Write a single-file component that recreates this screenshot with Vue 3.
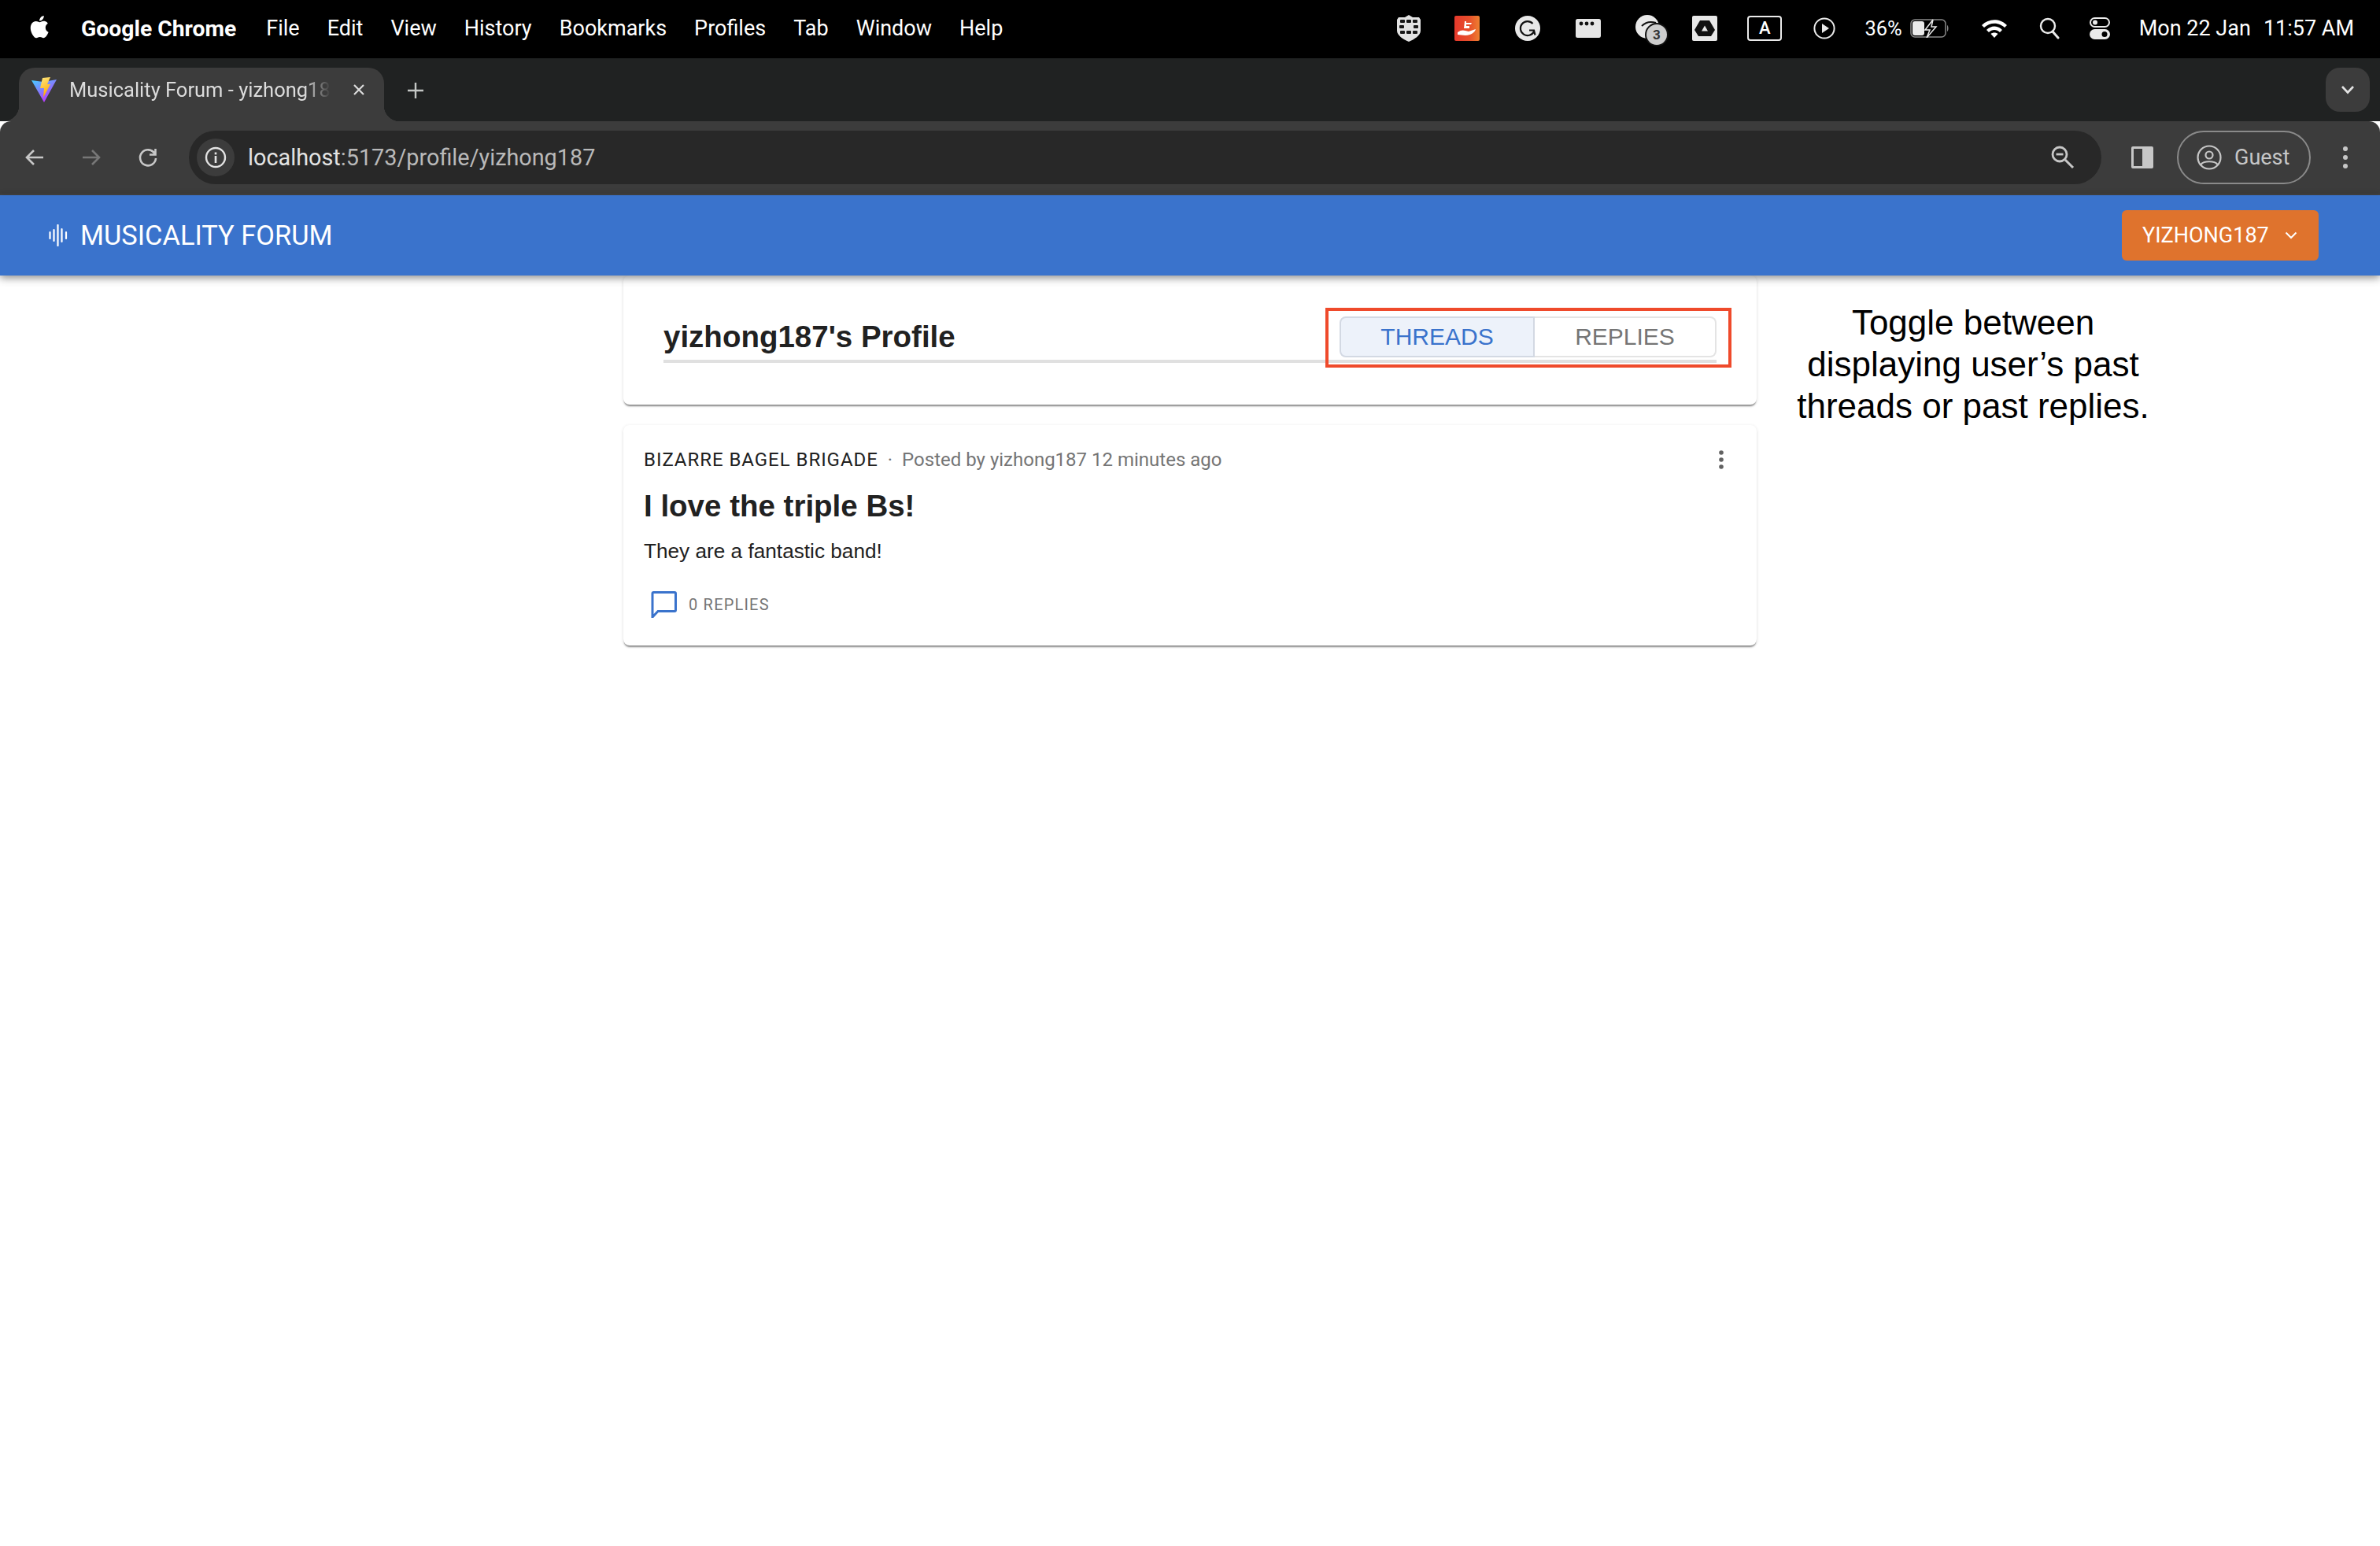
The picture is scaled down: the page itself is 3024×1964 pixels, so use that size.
<script setup>
const menus = ['File', 'Edit', 'View', 'History', 'Bookmarks', 'Profiles', 'Tab', 'Window', 'Help']
</script>

<template>
  <div class="screen">
    <!-- mac menu bar -->
    <div class="menubar">
      <svg class="apple" viewBox="0 0 24 28"><path d="M17.6 14.9c0-3 2.4-4.400 2.500-4.500-1.400-2-3.500-2.300-4.200-2.300-1.800-.2-3.500 1.100-4.400 1.100-.9 0-2.300-1-3.800-1-2 0-3.800 1.100-4.800 2.900-2 3.600-.5 8.800 1.500 11.700 1 1.400 2.100 3 3.600 3 1.500-.1 2-1 3.800-1s2.300 1 3.800.9c1.600 0 2.600-1.400 3.500-2.800 1.100-1.600 1.600-3.200 1.600-3.300-.1 0-3.100-1.200-3.100-4.700zM14.700 6.200c.8-1 1.300-2.300 1.200-3.700-1.100 0-2.600.8-3.400 1.800-.7.900-1.400 2.200-1.200 3.500 1.300.1 2.600-.6 3.400-1.600z" fill="#fff"/></svg>
      <span class="app-name">Google Chrome</span>
      <span v-for="m in menus" :key="m" class="menu-item">{{ m }}</span>

      <div class="status">
        <svg class="st st-shield" viewBox="0 0 30 34"><path d="M15 0 L20 3 H28 L30 6 V20 C30 26 22 31 15 34 C8 31 0 26 0 20 V6 L2 3 H10 Z" fill="#e2e2e2"/><g fill="#161616"><rect x="4" y="6" width="6" height="4" rx="1"/><rect x="12" y="6" width="6" height="4" rx="1"/><rect x="20" y="6" width="6" height="4" rx="1"/><rect x="3" y="13" width="6" height="4" rx="1"/><rect x="21" y="13" width="6" height="4" rx="1"/><rect x="4" y="20" width="6" height="4" rx="1"/><rect x="12" y="20" width="6" height="4" rx="1"/><rect x="20" y="20" width="6" height="4" rx="1"/></g></svg>
        <svg class="st st-red" viewBox="0 0 32 32"><defs><linearGradient id="redg" x1="0" x2="1"><stop offset="0" stop-color="#e5392c"/><stop offset="0.6" stop-color="#e8502c"/><stop offset="1" stop-color="#ee8030"/></linearGradient></defs><rect width="32" height="32" rx="2" fill="url(#redg)"/><path d="M4 21 C8 18 11 18 14 19 L18 20 L27 17 C26 21 21 25 14 25 C10 25 7 24 4 24 Z" fill="#fff"/><path d="M13 7 L15 7 V9 H22 L21 11 H15 V13 H19 V16 H12 Z" fill="#fff"/></svg>
        <svg class="st st-g" viewBox="0 0 32 32"><circle cx="16" cy="16" r="16" fill="#e8e8e8"/><path d="M22.500 10 A9 9 0 1 0 24 20 M25.500 24.500 L24 18.500 H18" fill="none" stroke="#111" stroke-width="2.200"/></svg>
        <svg class="st st-win" viewBox="0 0 32 24"><rect width="32" height="24" rx="2.500" fill="#e6e6e6"/><circle cx="7" cy="6" r="2.400" fill="#111"/><circle cx="14" cy="6" r="2.400" fill="#111"/><circle cx="21" cy="6" r="2.400" fill="#111"/></svg>
        <svg class="st st-cloud" viewBox="0 0 42 40"><circle cx="15" cy="15" r="15" fill="#e8e8e8"/><path d="M8 14 C14 8 20 8 26 10" fill="none" stroke="#111" stroke-width="2"/><circle cx="27" cy="25" r="15" fill="#111"/><circle cx="27" cy="25" r="13" fill="#cdcdcd"/><text x="27" y="31" text-anchor="middle" class="cloud-num">3</text></svg>
        <svg class="st st-drive" viewBox="0 0 32 32"><rect width="32" height="32" rx="2" fill="#e8e8e8"/><path d="M10 6 H22 L29 18 L24 26 H8 L3 18 Z" fill="#111"/><path d="M16 12.500 L20 19.500 H12 Z" fill="#e8e8e8"/></svg>
        <div class="st st-a">A</div>
        <svg class="st st-play" viewBox="0 0 28 28"><circle cx="14" cy="14" r="12.600" fill="none" stroke="#eaeaea" stroke-width="2"/><path d="M11 8 L20 14 L11 20 Z" fill="#eaeaea"/></svg>
        <span class="st-pct">36%</span>
        <svg class="st st-batt" viewBox="0 0 50 24"><rect x="1" y="1" width="44" height="22" rx="5" fill="none" stroke="#8a8a8a" stroke-width="1.500"/><rect x="3" y="3" width="15" height="18" rx="3" fill="#eaeaea"/><path d="M47 8 C49 9 49 15 47 16 Z" fill="#8a8a8a"/><path d="M29 1 L19 14 H25 L21 24 L33 10 H27 Z" fill="#000" stroke="#eaeaea" stroke-width="1.500"/></svg>
        <svg class="st st-wifi" viewBox="0 0 34 26"><path d="M1 9 C10 0 24 0 33 9 L30 12 C22 5 12 5 4 12 Z M7 15 C13 9 21 9 27 15 L24 18 C20 14 14 14 10 18 Z M12.500 20 C15 18 19 18 21.500 20 L17 25 Z" fill="#fff"/></svg>
        <svg class="st st-search" viewBox="0 0 26 28"><circle cx="11" cy="11" r="9" fill="none" stroke="#eaeaea" stroke-width="2.400"/><path d="M17 18 L24 26" stroke="#eaeaea" stroke-width="3" stroke-linecap="round"/></svg>
        <svg class="st st-ctrl" viewBox="0 0 26 28"><rect x="1" y="1" width="24" height="11" rx="5.500" fill="none" stroke="#eaeaea" stroke-width="2"/><circle cx="7" cy="6.500" r="3" fill="#eaeaea"/><rect y="15" width="26" height="13" rx="6.500" fill="#eaeaea"/><circle cx="19" cy="21.500" r="3.500" fill="#000"/></svg>
        <span class="clock"><span>Mon 22 Jan</span><span>11:57 AM</span></span>
      </div>
    </div>

    <!-- browser tabs -->
    <div class="tabstrip">
      <div class="tab">
        <svg class="vite" viewBox="0 0 32 32">
          <defs>
            <linearGradient id="vg1" x1="0" y1="0" x2="0.6" y2="1"><stop offset="0" stop-color="#41d1ff"/><stop offset="1" stop-color="#bd34fe"/></linearGradient>
            <linearGradient id="vg2" x1="0" y1="0" x2="0.3" y2="1"><stop offset="0" stop-color="#ffea83"/><stop offset="1" stop-color="#ffa800"/></linearGradient>
          </defs>
          <path d="M0 4 L15 6 L32 3 L16 32 Z" fill="url(#vg1)"/>
          <path d="M14 1 L24 0 L20 9 L24 9 L15 26 L16 14 L11 14 Z" fill="url(#vg2)"/>
        </svg>
        <span class="tab-title">Musicality Forum - yizhong187</span>
        <svg class="tab-close" viewBox="0 0 16 16"><path d="M2 2 L14 14 M14 2 L2 14" stroke="#dcdcdc" stroke-width="2.200"/></svg>
      </div>
      <svg class="tab-plus" viewBox="0 0 20 20"><path d="M10 0 V20 M0 10 H20" stroke="#c4c7c5" stroke-width="2.400"/></svg>
      <div class="tab-search">
        <svg viewBox="0 0 18 12" class="chev"><path d="M2 2 L9 9.500 L16 2" fill="none" stroke="#e3e3e3" stroke-width="2.600"/></svg>
      </div>
    </div>

    <!-- browser toolbar -->
    <div class="toolbar">
      <svg class="nav" viewBox="0 0 26 26"><path d="M24 13 H4 M12 4 L3 13 L12 22" fill="none" stroke="#c7c7c7" stroke-width="2.600"/></svg>
      <svg class="nav" viewBox="0 0 26 26"><path d="M2 13 H22 M14 4 L23 13 L14 22" fill="none" stroke="#777" stroke-width="2.600"/></svg>
      <svg class="nav" viewBox="0 0 26 26"><path d="M21.500 8 A10 10 0 1 0 23 14 M22.500 2 V9.500 H15" fill="none" stroke="#c7c7c7" stroke-width="2.600"/></svg>
      <div class="omnibox">
        <div class="site-info">
          <svg viewBox="0 0 28 28"><circle cx="14" cy="14" r="12" fill="none" stroke="#e3e3e3" stroke-width="2.400"/><rect x="12.700" y="12" width="2.600" height="9" fill="#e3e3e3"/><rect x="12.700" y="7.500" width="2.600" height="2.800" fill="#e3e3e3"/></svg>
        </div>
        <span class="url"><span class="host">localhost</span>:5173/profile/yizhong187</span>
        <svg class="zoom-ic" viewBox="0 0 30 30"><circle cx="11" cy="11" r="9" fill="none" stroke="#c7c7c7" stroke-width="2.800"/><path d="M6.500 11 H15.500" stroke="#c7c7c7" stroke-width="2.800"/><path d="M18 18 L28 28" stroke="#c7c7c7" stroke-width="3"/></svg>
      </div>
      <svg class="panel-ic" viewBox="0 0 28 28"><rect x="0" y="0" width="28" height="28" rx="2" fill="#c7c7c7"/><rect x="3" y="3" width="11" height="22" fill="#3c3c3c"/></svg>
      <div class="guest">
        <svg viewBox="0 0 32 32"><circle cx="16" cy="16" r="14.500" fill="none" stroke="#c7c7c7" stroke-width="2.200"/><circle cx="16" cy="13" r="4.500" fill="none" stroke="#c7c7c7" stroke-width="2.200"/><path d="M5.500 25 C9 20 23 20 26.500 25" fill="none" stroke="#c7c7c7" stroke-width="2.200"/></svg>
        <span>Guest</span>
      </div>
      <svg class="more-ic" viewBox="0 0 8 30"><circle cx="4" cy="4" r="3" fill="#c7c7c7"/><circle cx="4" cy="15" r="3" fill="#c7c7c7"/><circle cx="4" cy="26" r="3" fill="#c7c7c7"/></svg>
    </div>

    <!-- app -->
    <header class="appbar">
      <div class="brand">
        <svg viewBox="0 0 24 28" class="brand-ic"><path d="M1.500 10 V18 M6.500 7 V21 M11.500 1 V27 M16.500 6 V22 M22 10 V18" stroke="#fff" stroke-width="2.200" stroke-linecap="round"/></svg>
        <span>MUSICALITY FORUM</span>
      </div>
      <button class="user-btn">
        <span>YIZHONG187</span>
        <svg viewBox="0 0 16 10" class="user-chev"><path d="M1.500 1.500 L8 8 L14.500 1.500" fill="none" stroke="#fff" stroke-width="2"/></svg>
      </button>
    </header>

    <main class="content">
      <section class="card profile-card">
        <div class="profile-head">
          <h1>yizhong187's Profile</h1>
          <div class="toggle">
            <button class="toggle-btn active">THREADS</button>
            <button class="toggle-btn">REPLIES</button>
          </div>
          <div class="callout"></div>
        </div>
      </section>

      <article class="card thread-card">
        <div class="meta">
          <span class="group">BIZARRE BAGEL BRIGADE</span>
          <span class="sep">·</span>
          <span>Posted by yizhong187 12 minutes ago</span>
          <svg class="thread-more" viewBox="0 0 8 26"><circle cx="4" cy="4" r="2.800" fill="#616161"/><circle cx="4" cy="13" r="2.800" fill="#616161"/><circle cx="4" cy="22" r="2.800" fill="#616161"/></svg>
        </div>
        <h2>I love the triple Bs!</h2>
        <p>They are a fantastic band!</p>
        <div class="replies">
          <svg viewBox="0 0 34 34"><path d="M3 33 V3 Q3 1.500 4.500 1.500 H31 Q32.500 1.500 32.500 3 V24 Q32.500 25.500 31 25.500 H10 Z" fill="none" stroke="#3a73cc" stroke-width="3"/></svg>
          <span>0 REPLIES</span>
        </div>
      </article>

      <p class="note">Toggle between displaying user’s past threads or past replies.</p>
    </main>
  </div>
</template>

<style>
html, body { margin: 0; background: #fff; }
</style>

<style scoped>
.screen {
  width: 3024px;
  height: 1964px;
  overflow: hidden;
  position: relative;
  background: #fff;
  font-family: "Liberation Sans", Arial, sans-serif;
}

.menubar {
  height: 74px;
  background: #000;
  color: #fff;
  display: flex;
  align-items: center;
  font-family: Roboto, "Liberation Sans", sans-serif;
  padding-bottom: 2px;
  box-sizing: border-box;
}
.apple { width: 30px; height: 34px; margin-left: 36px; margin-bottom: 4px; }
.app-name { font-weight: 700; margin-left: 37px; margin-right: 38px; font-size: 28.3px; }
.menu-item { margin-right: 35px; font-size: 27px; }

.status {
  margin-left: auto;
  margin-right: 33px;
  display: flex;
  align-items: center;
}
.st { display: block; flex: none; }
.st-shield { width: 30px; height: 34px; margin-right: 43px; }
.st-red { width: 32px; height: 32px; margin-right: 45px; }
.st-g { width: 32px; height: 32px; margin-right: 45px; }
.st-win { width: 32px; height: 24px; margin-right: 44px; }
.st-cloud { width: 42px; height: 40px; margin-top: 6px; margin-right: 30px; }
.cloud-num { font-size: 17px; font-weight: 700; fill: #333; font-family: Roboto, sans-serif; }
.st-drive { width: 32px; height: 32px; margin-right: 38px; }
.st-a {
  width: 44px;
  height: 32px;
  box-sizing: border-box;
  border: 2px solid #eaeaea;
  border-radius: 4px;
  font-size: 22px;
  font-weight: 500;
  text-align: center;
  line-height: 28px;
  margin-right: 40px;
}
.st-play { width: 28px; height: 28px; margin-right: 37px; }
.st-pct { font-size: 25.5px; margin-right: 10px; }
.st-batt { width: 50px; height: 24px; margin-right: 40px; }
.st-wifi { width: 34px; height: 26px; margin-right: 40px; }
.st-search { width: 26px; height: 28px; margin-right: 38px; }
.st-ctrl { width: 26px; height: 28px; margin-right: 37px; }
.clock { font-size: 27px; display: flex; gap: 16px; }

.tabstrip {
  height: 80px;
  background: #202222;
  display: flex;
  padding: 12px 13px 0 24px;
  box-sizing: border-box;
}
.tab {
  width: 464px;
  height: 68px;
  background: #3c3c3c;
  border-radius: 20px 20px 0 0;
  display: flex;
  align-items: center;
  padding: 0 0 12px 16px;
  box-sizing: border-box;
  position: relative;
}
.tab::before,
.tab::after {
  content: "";
  position: absolute;
  bottom: 0;
  width: 20px;
  height: 20px;
}
.tab::before {
  left: -20px;
  background: radial-gradient(circle at 0 0, #202222 20px, #3c3c3c 20.5px);
}
.tab::after {
  right: -20px;
  background: radial-gradient(circle at 100% 0, #202222 20px, #3c3c3c 20.5px);
}
.vite { width: 32px; height: 32px; flex: none; }
.tab-title {
  margin-left: 16px;
  width: 332px;
  white-space: nowrap;
  overflow: hidden;
  color: #dcdcdc;
  font-family: Roboto, sans-serif;
  font-size: 25.5px;
  -webkit-mask-image: linear-gradient(90deg, #000 90%, transparent);
  mask-image: linear-gradient(90deg, #000 90%, transparent);
}
.tab-close { width: 16px; height: 16px; margin-left: 28px; flex: none; }
.tab-plus { width: 20px; height: 20px; margin: 19px 0 0 30px; }
.tab-search {
  margin-left: auto;
  width: 56px;
  height: 56px;
  border-radius: 18px;
  background: #3c3c3c;
  display: flex;
  align-items: center;
  justify-content: center;
}
.chev { width: 18px; height: 12px; }

.toolbar {
  height: 94px;
  background: #3c3c3c;
  border-bottom: 2px solid #444;
  box-sizing: border-box;
  border-radius: 14px 14px 0 0;
  display: flex;
  align-items: center;
  padding-left: 31px;
  position: relative;
}
.nav { width: 26px; height: 26px; margin-right: 46px; flex: none; }
.nav:nth-child(3) { margin-right: 39px; }
.omnibox {
  width: 2430px;
  height: 68px;
  border-radius: 34px;
  background: #282828;
  display: flex;
  align-items: center;
  padding: 0 34px 0 10px;
  box-sizing: border-box;
  flex: none;
}
.site-info {
  width: 48px;
  height: 48px;
  border-radius: 50%;
  background: #3c3c3c;
  display: flex;
  align-items: center;
  justify-content: center;
}
.site-info svg { width: 28px; height: 28px; }
.url { margin-left: 17px; color: #b9b9b9; font-family: Roboto, sans-serif; font-size: 28.8px; }
.host { color: #e3e3e3; }
.zoom-ic { width: 30px; height: 30px; margin-left: auto; }
.panel-ic { width: 28px; height: 28px; margin-left: 38px; flex: none; }
.guest {
  margin-left: 30px;
  width: 170px;
  height: 68px;
  box-sizing: border-box;
  border: 2px solid #8a8a8a;
  border-radius: 34px;
  display: flex;
  align-items: center;
  gap: 16px;
  padding-left: 23px;
  color: #c7c7c7;
  font-family: Roboto, sans-serif;
  font-size: 27px;
  flex: none;
}
.guest svg { width: 32px; height: 32px; }
.more-ic { width: 8px; height: 30px; margin-left: 40px; flex: none; }

.appbar {
  height: 102px;
  background: #3a73cc;
  display: flex;
  align-items: center;
  justify-content: space-between;
  padding: 0 78px 0 62px;
  box-shadow: 0 3px 10px rgba(0, 0, 0, 0.45);
  position: relative;
  z-index: 2;
  color: #fff;
}
.brand { display: flex; align-items: center; gap: 16px; font-family: Roboto, sans-serif; font-size: 34.4px; }
.brand-ic { width: 24px; height: 28px; }
.user-btn {
  width: 250px;
  height: 64px;
  background: #df732d;
  border: 0;
  border-radius: 6px;
  color: #fff;
  font-family: Roboto, sans-serif;
  font-size: 27px;
  display: flex;
  align-items: center;
  gap: 20px;
  padding: 0 0 0 26px;
}
.user-chev { width: 16px; height: 10px; }

.content {
  width: 1440px;
  margin: 0 auto;
  position: relative;
  display: flex;
  flex-direction: column;
  gap: 26px;
}
.card {
  background: #fff;
  border-radius: 8px;
  box-shadow: 0 3px 2px -1px rgba(0, 0, 0, 0.42), 0 1px 4px rgba(0, 0, 0, 0.12);
}
.profile-card { height: 164px; padding: 52px 51px 0; box-sizing: border-box; }
.profile-head {
  height: 55px;
  border-bottom: 4px solid #e0e0e0;
  display: flex;
  align-items: flex-start;
  justify-content: space-between;
  position: relative;
}
h1 {
  margin: 0;
  font-size: 38.5px;
  line-height: 52px;
  font-weight: 700;
  color: #212121;
}
.toggle { display: flex; width: 479px; height: 52px; }
.toggle-btn {
  flex: none;
  height: 52px;
  background: #fff;
  border: 2px solid #e4e4e4;
  font-family: "Liberation Sans", sans-serif;
  font-size: 30px;
  color: #757575;
  padding: 0;
  width: 231px;
  border-left: 0;
  border-radius: 0 8px 8px 0;
}
.toggle-btn.active {
  width: 248px;
  background: #edf2fa;
  color: #3a73cc;
  border: 2px solid #d3d9e3;
  border-radius: 8px 0 0 8px;
}
.callout {
  position: absolute;
  left: 841px;
  top: -11px;
  width: 516px;
  height: 76px;
  box-sizing: border-box;
  border: 4px solid #ef4a2b;
}

.thread-card { height: 280px; padding: 0 26px; box-sizing: border-box; position: relative; }
.meta {
  display: flex;
  align-items: center;
  height: 30px;
  padding-top: 29px;
  color: #757575;
  font-family: Roboto, sans-serif;
  font-size: 24px;
}
.group { color: #212121; letter-spacing: 0.95px; }
.sep { margin: 0 12px 0 12px; }
.thread-more { width: 8px; height: 26px; margin-left: auto; margin-right: 15px; }
h2 {
  margin: 19px 0 0;
  font-size: 38.5px;
  line-height: 50px;
  color: #212121;
  font-weight: 700;
}
.thread-card p {
  margin: 16px 0 0;
  font-family: "Liberation Sans", sans-serif;
  font-size: 26.2px;
  line-height: 32px;
  color: #212121;
}
.replies {
  display: flex;
  align-items: center;
  gap: 15px;
  margin: 35px 0 0 8px;
  color: #757575;
  font-family: Roboto, sans-serif;
  font-size: 20px;
  letter-spacing: 1.2px;
}
.replies svg { width: 34px; height: 34px; }

.note {
  position: absolute;
  left: 1490px;
  top: 33px;
  width: 450px;
  margin: 0;
  text-align: center;
  font-size: 44px;
  line-height: 53px;
  color: #000;
}
</style>
